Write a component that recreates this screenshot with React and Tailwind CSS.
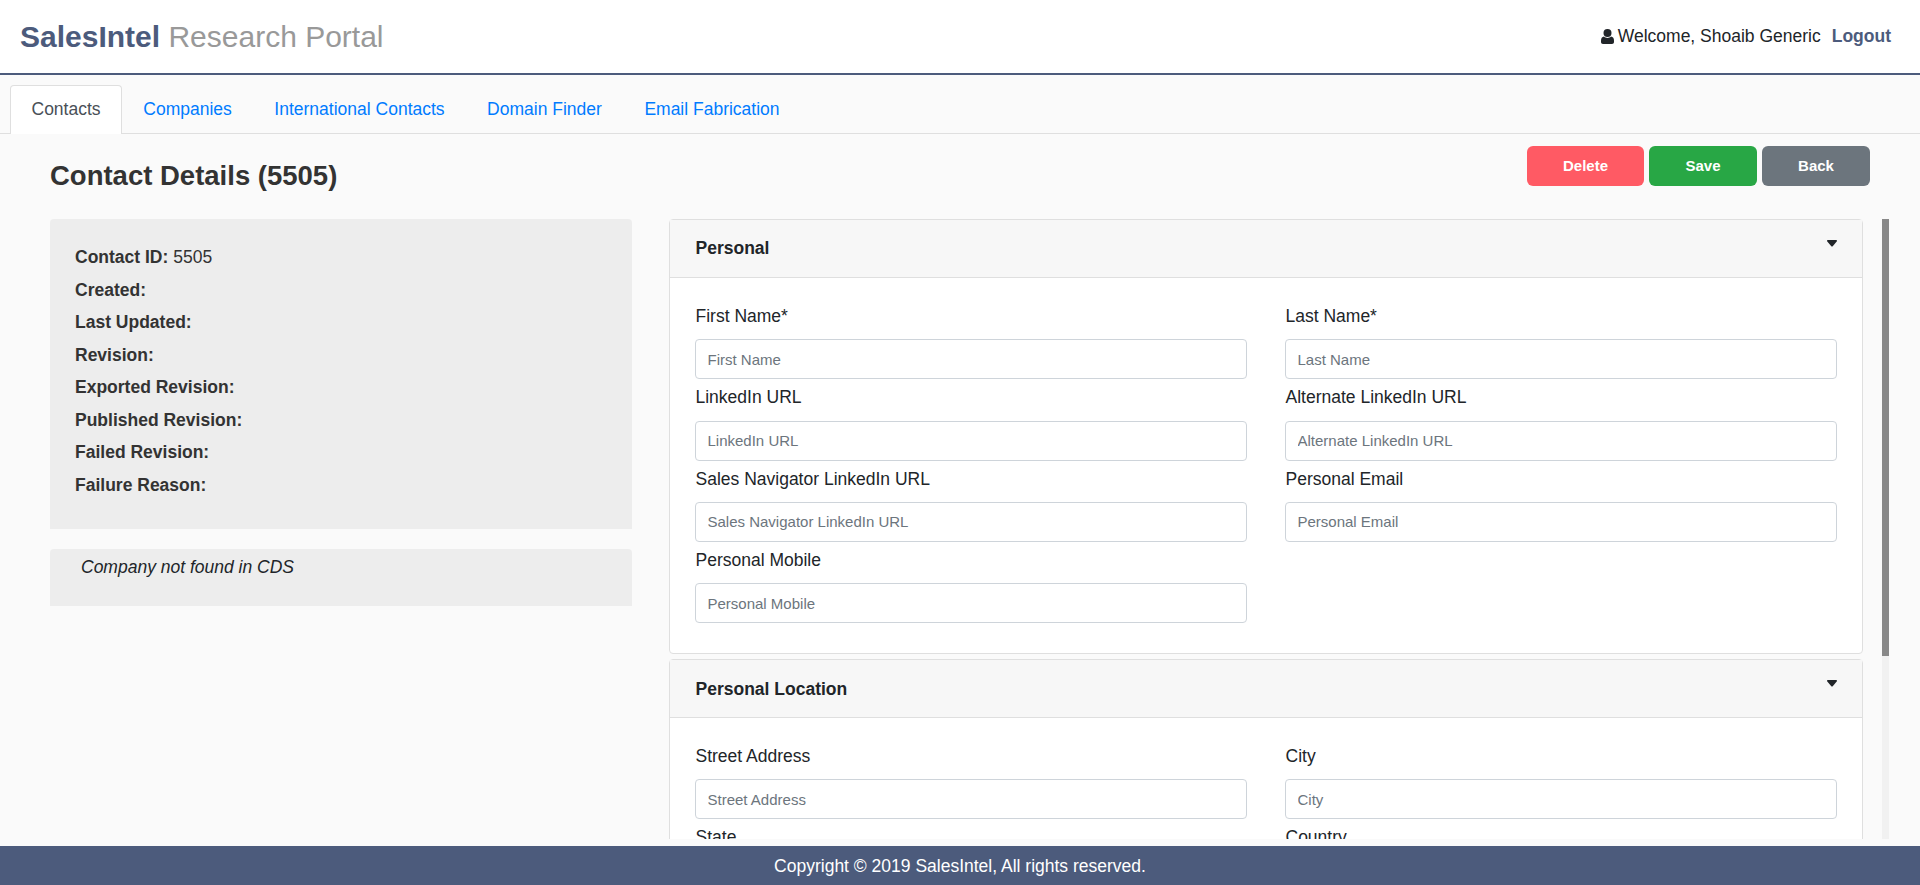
const tabs = ['Companies', 'International Contacts', 'Domain Finder', 'Email Fabrication'];
const meta = ['Created:', 'Last Updated:', 'Revision:', 'Exported Revision:', 'Published Revision:', 'Failed Revision:', 'Failure Reason:'];

function Field({ label, placeholder }) {
  return (
    <div className="mb-[6px]">
      <div className="mb-[11.3px] pl-[0.5px] text-[17.5px] leading-6 text-[#212529]">{label}</div>
      <input
        placeholder={placeholder || label.replace('*', '')}
        className="block h-10 w-full rounded border border-[#ced4da] bg-white px-[11.5px] text-[15px] text-[#495057] outline-none placeholder:text-[#6c757d]"
      />
    </div>
  );
}

function Section({ title, bodyClass, children }) {
  return (
    <div className="mb-[5px] rounded border border-[#dfdfdf] bg-white">
      <div className="flex h-[58px] items-center justify-between border-b border-[#dfdfdf] bg-[#f7f7f7] pl-[25.5px] pr-[25px]">
        <span className="text-[17.5px] font-bold text-[#212529]">{title}</span>
        <svg width="10" height="7" viewBox="0 0 10 7" className="mb-[10px]">
          <path d="M1 0h8c.9 0 1.3 1 .7 1.6L5.7 6.2c-.4.4-1 .4-1.4 0L.3 1.6C-.3 1 .1 0 1 0z" fill="#212529" />
        </svg>
      </div>
      <div className={`grid grid-cols-2 content-start gap-x-[38px] px-[25px] pt-[26px] ${bodyClass}`}>{children}</div>
    </div>
  );
}

export default function App() {
  return (
    <div className="flex h-screen flex-col overflow-hidden bg-[#fafafa] font-['Liberation_Sans',Arial,sans-serif] text-[17.5px] text-[#333]">
      <header className="flex h-[75px] shrink-0 items-center justify-between border-b-2 border-[#4c5b7c] bg-white pl-[20px] pr-[29px]">
        <div className="text-[30px]">
          <span className="font-bold text-[#4c5b7c]">SalesIntel</span> <span className="text-[#999]">Research Portal</span>
        </div>
        <div className="flex items-center text-[#212529]">
          <svg width="13" height="15" viewBox="0 0 13 15" className="mr-[4px]">
            <circle cx="6.5" cy="4" r="4" fill="#212529" />
            <path d="M3 7.500c1 1 2.200 1.400 3.500 1.400s2.500-.4 3.500-1.400c2 .2 3 1.800 3 4.200V13c0 1.200-.8 2-2 2H2c-1.200 0-2-.8-2-2v-1.300c0-2.400 1-4 3-4.200z" fill="#212529" />
          </svg>
          <span>Welcome, Shoaib Generic</span>
          <span className="ml-[11px] font-bold text-[#4c5b7c]">Logout</span>
        </div>
      </header>

      <nav className="flex h-[59px] shrink-0 items-end border-b border-[#dfdfdf] pl-[10px]">
        <div className="-mb-px flex h-[49px] items-center rounded-t border border-b-0 border-[#dfdfdf] bg-white px-[20.5px] pb-[2px] text-[#495057]">Contacts</div>
        {tabs.map((tab) => (
          <div key={tab} className="flex h-[48px] items-center px-[21.25px] text-[#007bff]">{tab}</div>
        ))}
      </nav>

      <main className="flex min-h-0 flex-1 flex-col pb-[7px] pl-[50px] pr-[31px]">
        <div className="flex h-[85px] shrink-0 items-start justify-between pr-[19px] pt-3">
          <h1 className="mt-[14px] text-[27.500px] font-bold leading-[32px] text-[#333]">Contact Details (5505)</h1>
          <div className="flex gap-[5px] text-[15px] font-bold text-white">
            <button className="h-10 w-[117px] rounded-md bg-[#ff5a64]">Delete</button>
            <button className="h-10 w-[108px] rounded-md bg-[#28a745]">Save</button>
            <button className="h-10 w-[108px] rounded-md bg-[#6c757d]">Back</button>
          </div>
        </div>

        <div className="flex min-h-0 flex-1 gap-[37px]">
          <aside className="w-[582px] shrink-0">
            <div className="h-[310px] rounded-t bg-[#ededed] pl-[25px] pt-[22px] leading-[32.5px]">
              <div><b>Contact ID:</b> 5505</div>
              {meta.map((m) => (
                <div key={m} className="font-bold">{m}</div>
              ))}
            </div>
            <div className="mt-[20px] h-[57px] rounded-t bg-[#ededed] pl-[31px] pt-[6px] italic leading-6 text-[#212529]">Company not found in CDS</div>
          </aside>

          <div className="min-w-0 flex-1 overflow-hidden">
            <Section title="Personal" bodyClass="pb-[24px]">
              <Field label="First Name*" />
              <Field label="Last Name*" />
              <Field label="LinkedIn URL" />
              <Field label="Alternate LinkedIn URL" />
              <Field label="Sales Navigator LinkedIn URL" />
              <Field label="Personal Email" />
              <Field label="Personal Mobile" />
            </Section>
            <Section title="Personal Location" bodyClass="min-h-[376px]">
              <Field label="Street Address" />
              <Field label="City" />
              <Field label="State" />
              <Field label="Country" />
            </Section>
          </div>

          <div className="-ml-[18px] w-[7px] shrink-0 bg-[#f1f1f1]">
            <div className="h-[437px] bg-[#888]" />
          </div>
        </div>
      </main>

      <footer className="flex h-[39px] shrink-0 items-center justify-center bg-[#4c5b7c] pt-px text-white">Copyright © 2019 SalesIntel, All rights reserved.</footer>
    </div>
  );
}
